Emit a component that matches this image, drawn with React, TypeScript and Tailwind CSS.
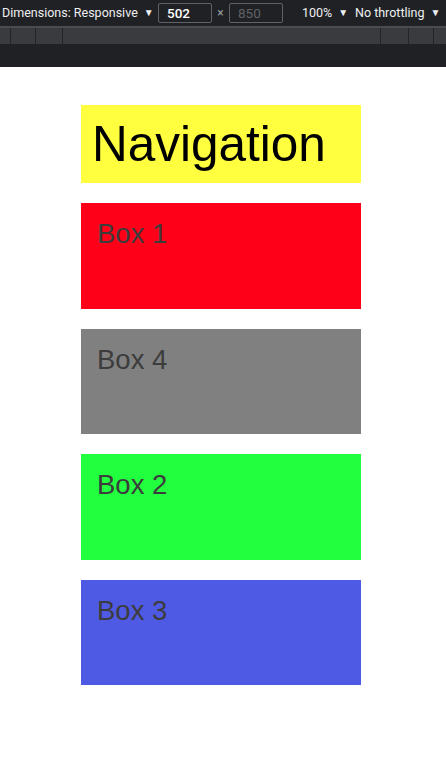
const boxes = [
  { label: 'Box 1', bg: 'bg-[#ff0019]' },
  { label: 'Box 4', bg: 'bg-[#808080]' },
  { label: 'Box 2', bg: 'bg-[#22ff3e]' },
  { label: 'Box 3', bg: 'bg-[#4f5ae4]' },
]

function Caret() {
  return <span className="ml-[6px] text-[10px] leading-none">▼</span>
}

function Toolbar() {
  return (
    <div className="bg-[#202124] font-['Roboto',sans-serif] text-[12.5px] text-[#eeeff1]">
      <div className="flex h-[26px] items-center whitespace-nowrap">
        <span className="ml-[2px] flex w-[141px] items-center">
          Dimensions: Responsive
          <Caret />
        </span>
        <div className="ml-[15px] flex h-[20px] w-[54px] items-center rounded-[2px] border border-[#5f6368] pl-[8px] text-[13.5px] font-medium text-white">
          502
        </div>
        <span className="w-[17px] text-center text-[12px] text-[#9aa0a6]">×</span>
        <div className="flex h-[20px] w-[54px] items-center rounded-[2px] border border-[#5f6368] pl-[8px] text-[13.5px] text-[#5f6266]">
          850
        </div>
        <span className="ml-[19px] flex w-[53px] items-center">
          100%
          <Caret />
        </span>
        <span className="flex items-center">
          No throttling
          <Caret />
        </span>
      </div>
      <div className="h-[2px] bg-[#4a4c50]" />
      <div className="flex h-[16px] bg-[#3a3b3f]">
        <div className="w-[10px]" />
        <div className="w-[1px] bg-[#232427]" />
        <div className="w-[24px]" />
        <div className="w-[1px] bg-[#232427]" />
        <div className="w-[26px]" />
        <div className="w-[1px] bg-[#232427]" />
        <div className="flex-1" />
        <div className="w-[1px] bg-[#232427]" />
        <div className="w-[27px]" />
        <div className="w-[1px] bg-[#232427]" />
        <div className="w-[24px]" />
        <div className="w-[1px] bg-[#232427]" />
        <div className="w-[12px]" />
      </div>
      <div className="h-[23px]" />
    </div>
  )
}

export default function App() {
  return (
    <div className="flex min-h-[781px] flex-col bg-white">
      <Toolbar />
      <div className="flex flex-col items-start gap-[20px] pl-[81px] pt-[38px] font-['Liberation_Sans',Arial,sans-serif]">
        <div className="h-[78px] w-[280px] bg-[#ffff40] pl-[11px] pt-[10px]">
          <h1 className="text-[49.5px] leading-[57px] text-black">Navigation</h1>
        </div>
        {boxes.map((box) => (
          <div key={box.label} className={`h-[105.5px] w-[280px] ${box.bg} pl-[16px] pt-[15px]`}>
            <p className="text-[27.5px] leading-[32px] text-[#3c3c3c]">{box.label}</p>
          </div>
        ))}
      </div>
    </div>
  )
}
